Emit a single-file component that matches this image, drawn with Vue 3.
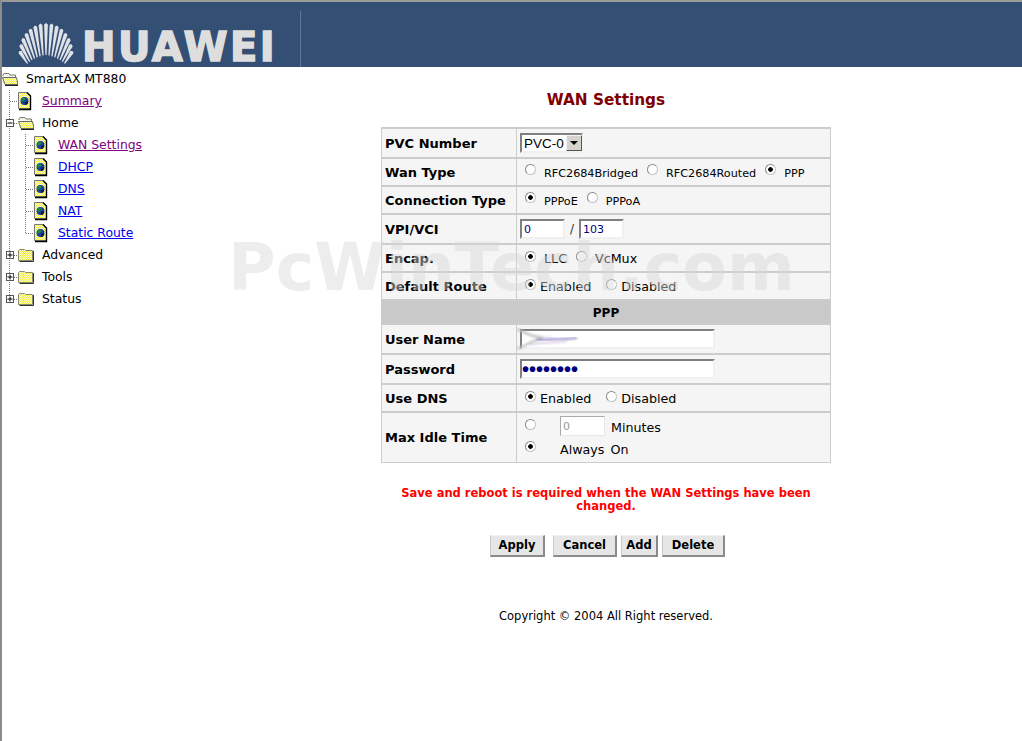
<script setup>
// tree rows: cells are 16px wide columns drawn left to right
const treeRows = [
  { cells: ["open"], label: "SmartAX MT880", root: true },
  { cells: ["tee", "doc"], label: "Summary", link: "visited" },
  { cells: ["minus", "open"], label: "Home" },
  { cells: ["line", "tee", "doc"], label: "WAN Settings", link: "visited" },
  { cells: ["line", "tee", "doc"], label: "DHCP", link: "new" },
  { cells: ["line", "tee", "doc"], label: "DNS", link: "new" },
  { cells: ["line", "tee", "doc"], label: "NAT", link: "new" },
  { cells: ["line", "corner", "doc"], label: "Static Route", link: "new" },
  { cells: ["plus", "folder"], label: "Advanced" },
  { cells: ["plus", "folder"], label: "Tools" },
  { cells: ["plusEnd", "folder"], label: "Status" }
];

const rays = [];
const count = 15;
const spread = 33;
for (let i = 0; i < count; i++) {
  const deg = -spread + (2 * spread * i) / (count - 1);
  const a = (deg * Math.PI) / 180;
  const outer = 69 - 20 * Math.pow(deg / spread, 2);
  const inner = 37 - 3 * Math.abs(deg / spread);
  const pt = (r, off) => {
    const x = 31 + r * Math.sin(a) + off * Math.cos(a);
    const y = 72 - r * Math.cos(a) + off * Math.sin(a);
    return x.toFixed(1) + "," + y.toFixed(1);
  };
  rays.push([pt(inner, -0.6), pt(inner, 0.6), pt(outer - 1.5, 1.9), pt(outer, 0), pt(outer - 1.5, -1.9)].join(" "));
}

const buttons = ["Apply", "Cancel", "Add", "Delete"];
</script>

<template>
  <div class="page">
    <header class="banner">
      <div class="brand">
        <svg class="shell" width="62" height="44" viewBox="0 0 62 44">
          <polygon v-for="(r, i) in rays" :key="i" :points="r" fill="#dfe3e7" />
        </svg>
        <span class="wordmark">HUAWEI</span>
      </div>
    </header>

    <div class="columns">
      <nav class="tree">
        <div v-for="row in treeRows" :key="row.label" class="tree-row">
          <svg
            v-for="(cell, i) in row.cells"
            :key="i"
            class="cell"
            width="16"
            height="22"
            viewBox="0 0 16 22"
          >
            <defs>
              <pattern id="dither" width="2" height="2" patternUnits="userSpaceOnUse">
                <rect width="2" height="2" fill="#eeee44" />
                <rect width="1" height="1" fill="#ffffcc" />
                <rect x="1" y="1" width="1" height="1" fill="#ffffcc" />
              </pattern>
            </defs>
            <template v-if="cell === 'line' || cell === 'tee' || cell === 'minus' || cell === 'plus'">
              <line x1="7.5" y1="0" x2="7.5" y2="22" class="dots" />
            </template>
            <template v-if="cell === 'corner' || cell === 'plusEnd'">
              <line x1="7.5" y1="0" x2="7.5" y2="11" class="dots" />
            </template>
            <template v-if="cell === 'tee' || cell === 'corner'">
              <line x1="8" y1="11.5" x2="16" y2="11.5" class="dots" />
            </template>
            <template v-if="cell === 'minus' || cell === 'plus' || cell === 'plusEnd'">
              <line x1="12" y1="11.5" x2="16" y2="11.5" class="dots" />
              <rect x="4.5" y="7.5" width="7" height="7" fill="#fff" stroke="#555" />
              <line x1="5.5" y1="11" x2="10.5" y2="11" stroke="#000" />
              <line v-if="cell !== 'minus'" x1="8" y1="8.5" x2="8" y2="13.5" stroke="#000" />
            </template>
            <template v-if="cell === 'folder'">
              <path d="M0.5 6.5 L1.5 5.5 H6.5 L7.5 6.5 H14.5 V16.5 H0.5 Z" fill="url(#dither)" stroke="#8a8a70" />
              <path d="M15.5 7 V17.5 H1.5" fill="none" stroke="#333" />
            </template>
            <template v-if="cell === 'open'">
              <path d="M0.5 8 L2 5.5 H7 L8 7 H13.5 V9.5" fill="#f4f4e0" stroke="#777" />
              <path d="M0.5 9.5 H14.5 L16 16.5 H3 Z" fill="url(#dither)" stroke="#666" />
              <path d="M3 17.5 H16" stroke="#222" />
            </template>
            <template v-if="cell === 'doc'">
              <path d="M0.5 2.5 H9 L12.5 6 V18.5 H0.5 Z" fill="url(#dither)" stroke="#777" />
              <path d="M9 2.5 L12.5 6 V19.5 H1" fill="none" stroke="#000" stroke-width="1.4" />
              <circle cx="6.5" cy="11" r="4" fill="#1c3f9c" />
              <path d="M4 8.5 C6 7 8 8 7.5 9.5 C7 11 5 10 4.5 12 C3 11.5 3 9.5 4 8.5 Z" fill="#1d8a4e" />
              <path d="M7 12 L10 11 C10.5 13 9 15 7 15 Z" fill="#17163f" />
            </template>
          </svg>
          <a v-if="row.link" class="tree-link" :class="row.link" href="#" @click.prevent>{{ row.label }}</a>
          <span v-else class="tree-label" :class="{ root: row.root }">{{ row.label }}</span>
        </div>
      </nav>

      <main class="content">
        <h1 class="title">WAN Settings</h1>

        <table class="settings">
          <tbody>
            <tr class="h30">
              <th>PVC Number</th>
              <td>
                <span class="select-wrap">
                  <select class="pvc">
                    <option>PVC-0</option>
                  </select>
                  <span class="select-btn"><i></i></span>
                </span>
              </td>
            </tr>
            <tr class="h28">
              <th>Wan Type</th>
              <td class="small">
                <label class="opt wide"><input type="radio" name="wan" />RFC2684Bridged</label>
                <label class="opt wide"><input type="radio" name="wan" />RFC2684Routed</label>
                <label class="opt wide"><input type="radio" name="wan" checked />PPP</label>
              </td>
            </tr>
            <tr class="h28">
              <th>Connection Type</th>
              <td class="small">
                <label class="opt wide"><input type="radio" name="conn" checked />PPPoE</label>
                <label class="opt wide"><input type="radio" name="conn" />PPPoA</label>
              </td>
            </tr>
            <tr class="h30">
              <th>VPI/VCI</th>
              <td class="vpi">
                <input class="text short" type="text" value="0" />
                <span class="slash">/</span>
                <input class="text short" type="text" value="103" />
              </td>
            </tr>
            <tr class="h28">
              <th>Encap.</th>
              <td>
                <label class="opt wide"><input type="radio" name="encap" checked />LLC</label>
                <label class="opt wide"><input type="radio" name="encap" />VcMux</label>
              </td>
            </tr>
            <tr class="h28">
              <th>Default Route</th>
              <td>
                <label class="opt tight"><input type="radio" name="route" checked />Enabled</label>
                <label class="opt tight"><input type="radio" name="route" />Disabled</label>
              </td>
            </tr>
            <tr class="section">
              <th colspan="2">PPP</th>
            </tr>
            <tr class="h30">
              <th>User Name</th>
              <td class="field">
                <span class="user-wrap">
                  <input class="text long" type="text" />
                  <svg class="scribble" width="68" height="24" viewBox="0 0 68 24">
                    <defs>
                      <filter id="soft"><feGaussianBlur stdDeviation="0.8" /></filter>
                    </defs>
                    <path d="M0 2 C10 7 16 10 26 11 C16 13 10 18 0 22" fill="none" stroke="#bdbdbd" stroke-width="2" filter="url(#soft)" />
                    <path d="M6 5 C16 9 26 10 34 10" fill="none" stroke="#d4d4dc" stroke-width="1" filter="url(#soft)" />
                    <path d="M20 13 C30 12 44 13 60 11" fill="none" stroke="#9a92cc" stroke-width="2.2" filter="url(#soft)" />
                    <path d="M36 9 h24" fill="none" stroke="#6f6ab0" stroke-width="1.8" stroke-dasharray="3 1.5" filter="url(#soft)" />
                    <path d="M12 18 C22 15 36 16 50 14" fill="none" stroke="#d3c3de" stroke-width="1.5" filter="url(#soft)" />
                  </svg>
                </span>
              </td>
            </tr>
            <tr class="h30">
              <th>Password</th>
              <td class="field"><input class="text long secret" type="password" value="password" /></td>
            </tr>
            <tr class="h28">
              <th>Use DNS</th>
              <td>
                <label class="opt tight"><input type="radio" name="dns" checked />Enabled</label>
                <label class="opt tight"><input type="radio" name="dns" />Disabled</label>
              </td>
            </tr>
            <tr class="h50 last">
              <th>Max Idle Time</th>
              <td>
                <div class="idle-line">
                  <input type="radio" name="idle" />
                  <input class="text idle" type="text" value="0" disabled />
                  <span class="idle-text">Minutes</span>
                </div>
                <div class="idle-line">
                  <input type="radio" name="idle" checked />
                  <span class="idle-text always">Always On</span>
                </div>
              </td>
            </tr>
          </tbody>
        </table>

        <p class="warning">Save and reboot is required when the WAN Settings have been changed.</p>

        <div class="actions">
          <button v-for="b in buttons" :key="b" class="btn" :class="'btn-' + b.toLowerCase()" type="button">{{ b }}</button>
        </div>

        <p class="copyright">Copyright © 2004 All Right reserved.</p>
      </main>
    </div>

    <div class="watermark">PcWinTech.com</div>
  </div>
</template>

<style>
html,
body {
  margin: 0;
  background: #fff;
  overflow: hidden;
}
</style>

<style scoped>
.page {
  position: relative;
  box-sizing: border-box;
  min-height: 741px;
  border-left: 2px solid #8c8c8c;
  font-family: "DejaVu Sans", Verdana, sans-serif;
  font-size: 12.7px;
  color: #000;
}

.banner {
  box-sizing: border-box;
  height: 67px;
  border-top: 2px solid #9a9a9a;
  background: #344f74;
  display: flex;
  align-items: flex-end;
}

.brand {
  box-sizing: border-box;
  width: 299px;
  height: 56px;
  border-right: 1px solid #5f7594;
  display: flex;
  align-items: flex-start;
}

.shell {
  margin: 9px 0 0 13px;
  flex: none;
}

.wordmark {
  margin: 13px 0 0 5px;
  font-size: 40px;
  line-height: 46px;
  font-weight: bold;
  letter-spacing: 2.5px;
  color: #dedede;
  -webkit-text-stroke: 1.5px #dedede;
}

.columns {
  display: flex;
}

.tree {
  width: 188px;
  flex: none;
  padding-top: 1px;
  font-size: 12.4px;
}

.tree-row {
  height: 22px;
  display: flex;
  align-items: center;
  white-space: nowrap;
}

.cell {
  flex: none;
  display: block;
}

.dots {
  stroke: #777;
  stroke-width: 1;
  stroke-dasharray: 1 1;
}

.tree-label,
.tree-link {
  margin-left: 8px;
  line-height: 22px;
}

.tree-link.visited {
  color: #800080;
}

.tree-link.new {
  color: #0000ee;
}

.content {
  width: 832px;
  flex: none;
  display: flex;
  flex-direction: column;
  align-items: center;
}

.title {
  margin: 23px 0 17px;
  font-size: 15.3px;
  line-height: 20px;
  font-weight: bold;
  color: #800000;
}

.settings {
  width: 450px;
  border-collapse: collapse;
  table-layout: fixed;
}

.settings th,
.settings td {
  box-sizing: border-box;
  padding: 0;
  background: #f5f5f5;
  border: solid #cccccc;
  border-width: 2px 1px;
  vertical-align: middle;
  text-align: left;
}

.settings th {
  width: 135px;
  padding-left: 3px;
  font-weight: bold;
  font-size: 13px;
}

.settings td {
  padding-left: 3px;
}

.last th,
.last td {
  border-bottom-width: 1px;
}

.h28 {
  height: 28px;
}

.h30 {
  height: 30px;
}

.h50 {
  height: 50px;
}

.settings .section th {
  height: 24px;
  background: #c9c9c9;
  text-align: center;
  font-size: 12px;
  padding: 1px 0 0;
}

.opt {
  display: inline-flex;
  align-items: center;
  padding-top: 2px;
}

input[type="radio"] {
  appearance: none;
  box-sizing: border-box;
  width: 11px;
  height: 11px;
  margin: 0;
  flex: none;
  border-radius: 50%;
  background: #fff;
  border: 1px solid #c4c4c4;
  border-top-color: #8a8a8a;
  border-left-color: #8a8a8a;
  position: relative;
  top: -2px;
}

input[type="radio"]:checked {
  background: radial-gradient(circle, #000 0 2px, #fff 2.6px);
}

.small {
  font-size: 11.2px;
}

.small .opt {
  padding-top: 5px;
}

.small .opt input {
  top: -4px;
}

.opt.wide {
  margin-left: 5px;
  margin-right: 4px;
}

.opt.wide input {
  margin-right: 8px;
}

.opt.tight {
  margin-left: 5px;
  margin-right: 10px;
}

.opt.tight input {
  margin-right: 4px;
}

.text {
  box-sizing: border-box;
  height: 20px;
  margin: 0;
  padding: 0 2px;
  font: 11px "DejaVu Sans", Verdana, sans-serif;
  color: #00007f;
  background: #fff;
  border: 2px solid #f0f0f0;
  border-top-color: #808080;
  border-left-color: #808080;
  outline: none;
}

.short {
  width: 45px;
}

.long {
  width: 195px;
}

.secret {
  padding: 0;
  font: bold 20px "Liberation Sans", Arial, sans-serif;
}

.vpi {
  white-space: nowrap;
  font-size: 12px;
}

.slash {
  margin: 0 5px;
  color: #333;
}

.field {
  line-height: 0;
}

.user-wrap {
  position: relative;
  display: inline-block;
}

.scribble {
  position: absolute;
  left: -3px;
  top: -2px;
}

.select-wrap {
  position: relative;
  display: inline-block;
  line-height: 0;
}

.pvc {
  appearance: none;
  box-sizing: border-box;
  width: 63px;
  height: 20px;
  margin: 0;
  padding: 0 0 0 2px;
  font: 13.5px "Liberation Sans", Arial, sans-serif;
  color: #000;
  background: #fff;
  border: 2px solid #f0f0f0;
  border-top-color: #808080;
  border-left-color: #808080;
  border-radius: 0;
}

.select-btn {
  position: absolute;
  right: 1px;
  top: 2px;
  width: 16px;
  height: 16px;
  box-sizing: border-box;
  background: #d6d3ce;
  border: 1px solid;
  border-color: #f4f4f4 #555 #555 #f4f4f4;
  display: flex;
  align-items: center;
  justify-content: center;
}

.select-btn i {
  width: 0;
  height: 0;
  border-left: 4px solid transparent;
  border-right: 4px solid transparent;
  border-top: 4px solid #000;
}

.idle-line {
  display: flex;
  align-items: center;
  height: 22px;
  margin-left: 5px;
}

.idle-line .idle {
  width: 45px;
  margin: 0 6px 0 24px;
  color: #999;
  border-width: 1px;
  border-color: #aaa #e8e8e8 #e8e8e8 #aaa;
}

.idle-text {
  padding-top: 2px;
  word-spacing: 2px;
}

.always {
  margin-left: 24px;
}

.warning {
  width: 450px;
  margin: 24px 0 22px;
  font-size: 11.5px;
  line-height: 13px;
  font-weight: bold;
  color: #ff0000;
  text-align: center;
}

.actions {
  display: flex;
  gap: 4px;
  margin-left: 3px;
}

.btn {
  box-sizing: border-box;
  height: 22px;
  padding: 0;
  font: bold 11.5px "DejaVu Sans", Verdana, sans-serif;
  color: #000;
  background: #e6e6e6;
  border: 1px solid #f2f2f2;
  border-right: 2px solid #8a8a8a;
  border-bottom: 2px solid #8a8a8a;
  border-left-color: #c8c8c8;
}

.btn-apply {
  width: 55px;
  margin-right: 4px;
}

.btn-cancel {
  width: 64px;
}

.btn-add {
  width: 37px;
}

.btn-delete {
  width: 63px;
}

.copyright {
  margin: 51px 0 0;
  font-size: 11.5px;
  line-height: 16px;
}

.watermark {
  position: absolute;
  left: 226px;
  top: 230px;
  font-family: "DejaVu Sans", Verdana, sans-serif;
  font-size: 65px;
  line-height: 76px;
  font-weight: bold;
  color: rgba(215, 215, 215, 0.45);
  white-space: nowrap;
  pointer-events: none;
}
</style>
